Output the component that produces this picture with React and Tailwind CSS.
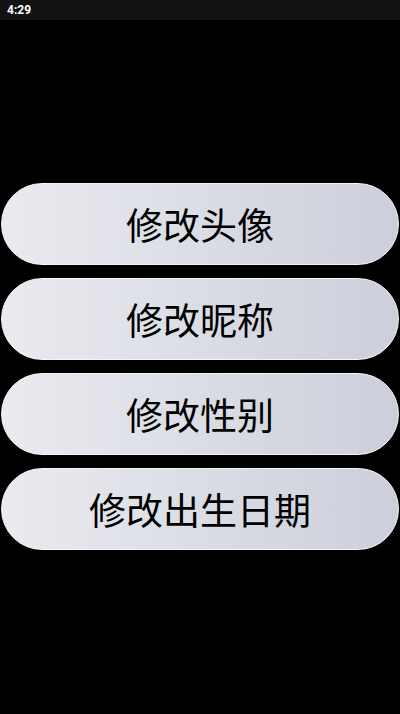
import React from 'react';

const items = ['修改头像', '修改昵称', '修改性别', '修改出生日期'];

export default function App() {
  return (
    <div className="w-[400px] h-[714px] bg-black overflow-hidden font-['Noto_Sans_CJK_SC','Noto_Sans',sans-serif]">
      {/* status bar */}
      <div className="h-5 bg-[#121214] flex items-center px-[7px]">
        <span className="text-white text-[12px] font-bold font-['Roboto',sans-serif] leading-none">4:29</span>
      </div>

      <div className="mt-[163px] px-[1px] flex flex-col gap-[13px]">
        {items.map((label) => (
          <button
            key={label}
            className="h-[82px] w-full rounded-full border border-[#f4f5f8] bg-gradient-to-r from-[#eaebf0] to-[#cccfda] flex items-center justify-center text-black text-[37px] leading-none"
          >
            {label}
          </button>
        ))}
      </div>
    </div>
  );
}
